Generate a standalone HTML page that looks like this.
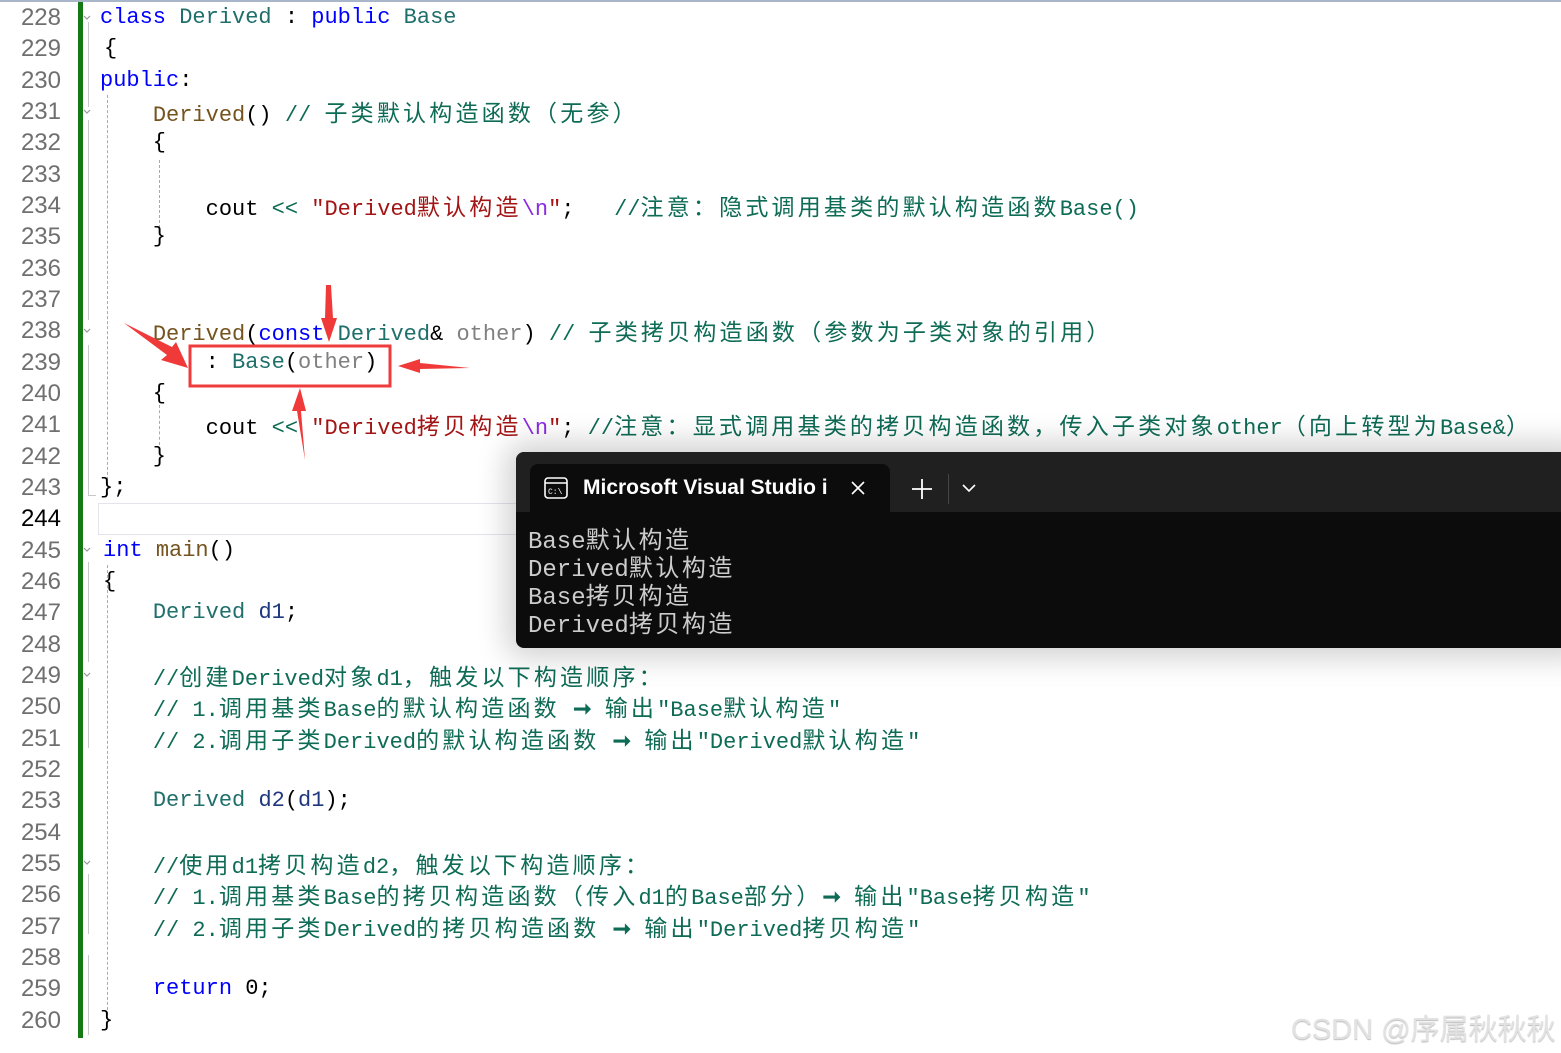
<!DOCTYPE html>
<html><head><meta charset="utf-8">
<style>
html,body{margin:0;padding:0;width:1561px;height:1053px;overflow:hidden;background:#fff;}
.top{position:absolute;left:0;top:0;width:1561px;height:2px;background:#a9b6c9;}
.ln{position:absolute;left:0;width:61px;text-align:right;font:24px "Liberation Sans",sans-serif;color:#6f6f6f;height:31px;line-height:31px;}
.cd{position:absolute;left:100px;white-space:pre;font:22px "Liberation Mono","Noto Sans CJK SC",monospace;color:#000;height:31px;line-height:31px;}
i{font-style:normal;font-family:"Noto Sans CJK SC",sans-serif;font-size:23px;letter-spacing:3.2px;}
.k{color:#0000ff}.t{color:#1f6f6b}.f{color:#74531f}.s{color:#a31515}.e{color:#8a2be2}.c{color:#0e6b55}.g{color:#808080}.v{color:#1f377f}
.bar{position:absolute;left:78px;top:2px;width:5px;height:1036px;background:#157a15;}
.term{position:absolute;left:516px;top:452px;width:1060px;height:196px;background:#0c0c0c;border-radius:8px 0 0 8px;box-shadow:0 0 30px 10px rgba(0,0,0,0.18);}
.tabbar{position:absolute;left:0;top:0;width:100%;height:60px;background:#202020;border-radius:8px 0 0 0;}
.tab{position:absolute;left:14px;top:12px;width:360px;height:50px;background:#0c0c0c;border-radius:8px 8px 0 0;}
.tt{position:absolute;left:53px;top:12px;font:600 21px "Liberation Sans",sans-serif;color:#fff;white-space:nowrap;}
.out{position:absolute;left:12px;top:72px;font:24px "Liberation Mono","Noto Sans CJK SC",monospace;color:#cccccc;white-space:pre;}
.out div{height:28px;line-height:28px;overflow:visible;}
.out i{font-size:24px;letter-spacing:2.5px;line-height:28px;}
.wm{position:absolute;left:1291px;top:1006px;font:29px "Liberation Sans","Noto Sans CJK SC",sans-serif;color:#e2e2e2;text-shadow:0 1px 1px #bbb;white-space:nowrap;}
</style></head><body>
<div class="top"></div>
<div class="bar"></div>
<div style="position:absolute;left:88px;top:22px;width:1px;height:85px;background:#c8c8c8"></div>
<div style="position:absolute;left:88px;top:120px;width:1px;height:200px;background:#c8c8c8"></div>
<div style="position:absolute;left:88px;top:345px;width:1px;height:150px;background:#c8c8c8"></div>
<div style="position:absolute;left:88px;top:495px;width:8px;height:1px;background:#c8c8c8"></div>
<div style="position:absolute;left:88px;top:562px;width:1px;height:100px;background:#c8c8c8"></div>
<div style="position:absolute;left:88px;top:688px;width:1px;height:60px;background:#c8c8c8"></div>
<div style="position:absolute;left:88px;top:874px;width:1px;height:60px;background:#c8c8c8"></div>
<div style="position:absolute;left:88px;top:955px;width:1px;height:80px;background:#c8c8c8"></div>
<div style="position:absolute;left:107px;top:95px;width:0;height:400px;border-left:1px dashed #aaa"></div>
<div style="position:absolute;left:159px;top:160px;width:0;height:68px;border-left:1px dashed #aaa"></div>
<div style="position:absolute;left:159px;top:405px;width:0;height:40px;border-left:1px dashed #aaa"></div>
<div style="position:absolute;left:107px;top:565px;width:0;height:455px;border-left:1px dashed #aaa"></div>
<div style="position:absolute;left:98px;top:503px;width:430px;height:30px;border:1px solid #e4e4ec;border-right:none"></div>

<div class="ln" style="top:2px">228</div>
<div class="ln" style="top:33px">229</div>
<div class="ln" style="top:65px">230</div>
<div class="ln" style="top:96px">231</div>
<div class="ln" style="top:127px">232</div>
<div class="ln" style="top:159px">233</div>
<div class="ln" style="top:190px">234</div>
<div class="ln" style="top:221px">235</div>
<div class="ln" style="top:253px">236</div>
<div class="ln" style="top:284px">237</div>
<div class="ln" style="top:315px">238</div>
<div class="ln" style="top:347px">239</div>
<div class="ln" style="top:378px">240</div>
<div class="ln" style="top:409px">241</div>
<div class="ln" style="top:441px">242</div>
<div class="ln" style="top:472px">243</div>
<div class="ln" style="top:503px;color:#000">244</div>
<div class="ln" style="top:535px">245</div>
<div class="ln" style="top:566px">246</div>
<div class="ln" style="top:597px">247</div>
<div class="ln" style="top:629px">248</div>
<div class="ln" style="top:660px">249</div>
<div class="ln" style="top:691px">250</div>
<div class="ln" style="top:723px">251</div>
<div class="ln" style="top:754px">252</div>
<div class="ln" style="top:785px">253</div>
<div class="ln" style="top:817px">254</div>
<div class="ln" style="top:848px">255</div>
<div class="ln" style="top:879px">256</div>
<div class="ln" style="top:911px">257</div>
<div class="ln" style="top:942px">258</div>
<div class="ln" style="top:973px">259</div>
<div class="ln" style="top:1005px">260</div>

<div class="cd" style="top:2px"><span class="k">class</span> <span class="t">Derived</span> : <span class="k">public</span> <span class="t">Base</span></div>
<div class="cd" style="top:33px;left:104px">{</div>
<div class="cd" style="top:65px"><span class="k">public</span>:</div>
<div class="cd" style="top:96px">    <span class="f">Derived</span>() <span class="c">// <i>子类默认构造函数（无参）</i></span></div>
<div class="cd" style="top:127px">    {</div>
<div class="cd" style="top:190px">        cout <span class="c">&lt;&lt;</span> <span class="s">"Derived<i>默认构造</i></span><span class="e">\n</span><span class="s">"</span>;   <span class="c">//<i>注意：隐式调用基类的默认构造函数</i>Base()</span></div>
<div class="cd" style="top:221px">    }</div>
<div class="cd" style="top:315px">    <span class="f">Derived</span>(<span class="k">const</span> <span class="t">Derived</span>&amp; <span class="g">other</span>) <span class="c">// <i>子类拷贝构造函数（参数为子类对象的引用）</i></span></div>
<div class="cd" style="top:347px">        : <span class="t">Base</span>(<span class="g">other</span>)</div>
<div class="cd" style="top:378px">    {</div>
<div class="cd" style="top:409px">        cout <span class="c">&lt;&lt;</span> <span class="s">"Derived<i>拷贝构造</i></span><span class="e">\n</span><span class="s">"</span>; <span class="c">//<i>注意：显式调用基类的拷贝构造函数，传入子类对象</i>other<i>（向上转型为</i>Base&amp;<i>）</i></span></div>
<div class="cd" style="top:441px">    }</div>
<div class="cd" style="top:472px">};</div>
<div class="cd" style="top:535px;left:103px"><span class="k">int</span> <span class="f">main</span>()</div>
<div class="cd" style="top:566px;left:103px">{</div>
<div class="cd" style="top:597px">    <span class="t">Derived</span> <span class="v">d1</span>;</div>
<div class="cd" style="top:660px">    <span class="c">//<i>创建</i>Derived<i>对象</i>d1<i>，触发以下构造顺序：</i></span></div>
<div class="cd" style="top:691px">    <span class="c">// 1.<i>调用基类</i>Base<i>的默认构造函数</i> <b>➞</b> <i>输出</i>"Base<i>默认构造</i>"</span></div>
<div class="cd" style="top:723px">    <span class="c">// 2.<i>调用子类</i>Derived<i>的默认构造函数</i> <b>➞</b> <i>输出</i>"Derived<i>默认构造</i>"</span></div>
<div class="cd" style="top:785px">    <span class="t">Derived</span> <span class="v">d2</span>(<span class="v">d1</span>);</div>
<div class="cd" style="top:848px">    <span class="c">//<i>使用</i>d1<i>拷贝构造</i>d2<i>，触发以下构造顺序：</i></span></div>
<div class="cd" style="top:879px">    <span class="c">// 1.<i>调用基类</i>Base<i>的拷贝构造函数（传入</i>d1<i>的</i>Base<i>部分）</i><b>➞</b> <i>输出</i>"Base<i>拷贝构造</i>"</span></div>
<div class="cd" style="top:911px">    <span class="c">// 2.<i>调用子类</i>Derived<i>的拷贝构造函数</i> <b>➞</b> <i>输出</i>"Derived<i>拷贝构造</i>"</span></div>
<div class="cd" style="top:973px">    <span class="k">return</span> 0;</div>
<div class="cd" style="top:1005px">}</div>

<svg style="position:absolute;left:0;top:0" width="1561" height="1053">
<g fill="none" stroke="#999" stroke-width="1.2">
<path d="M84 16 l3 3 l3 -3"/><path d="M84 110 l3 3 l3 -3"/><path d="M84 329 l3 3 l3 -3"/><path d="M84 548 l3 3 l3 -3"/><path d="M84 673 l3 3 l3 -3"/><path d="M84 861 l3 3 l3 -3"/>
</g>
<rect x="190" y="346" width="200" height="40" fill="none" stroke="#ef3b3b" stroke-width="3"/>
<g fill="#f03a3a">
<polygon points="124,323 172,347 176,342 188,368 161,360 167,355"/>
<polygon points="326,285 331,285 333,318 337,318 329,342 321,318 325,318"/>
<polygon points="470,368 420,363 420,359 398,366 420,373 420,369"/>
<polygon points="305,460 301,411 306,411 300,388 292,411 297,411"/>
</g>
</svg>

<div class="term">
 <div class="tabbar"></div>
 <div class="tab">
  <svg style="position:absolute;left:14px;top:13px" width="24" height="22" viewBox="0 0 24 22"><rect x="1" y="1" width="22" height="20" rx="3" fill="none" stroke="#fff" stroke-width="1.6"/><line x1="1" y1="6" x2="23" y2="6" stroke="#fff" stroke-width="1.4"/><text x="4" y="17" font-family="Liberation Mono" font-size="8" fill="#fff">C:\</text></svg>
  <div class="tt">Microsoft Visual Studio i</div>
  <svg style="position:absolute;left:320px;top:16px" width="16" height="16"><path d="M2 2L14 14M14 2L2 14" stroke="#fff" stroke-width="1.6"/></svg>
 </div>
 <svg style="position:absolute;left:395px;top:26px" width="22" height="22"><path d="M11 1V21M1 11H21" stroke="#fff" stroke-width="1.8"/></svg>
 <div style="position:absolute;left:432px;top:22px;width:1px;height:30px;background:#444"></div>
 <svg style="position:absolute;left:446px;top:31px" width="14" height="10"><path d="M1 2L7 8L13 2" stroke="#fff" stroke-width="1.6" fill="none"/></svg>
 <div class="out"><div>Base<i>默认构造</i></div><div>Derived<i>默认构造</i></div><div>Base<i>拷贝构造</i></div><div>Derived<i>拷贝构造</i></div></div>
</div>

<div class="wm">CSDN @序属秋秋秋</div>
</body></html>
